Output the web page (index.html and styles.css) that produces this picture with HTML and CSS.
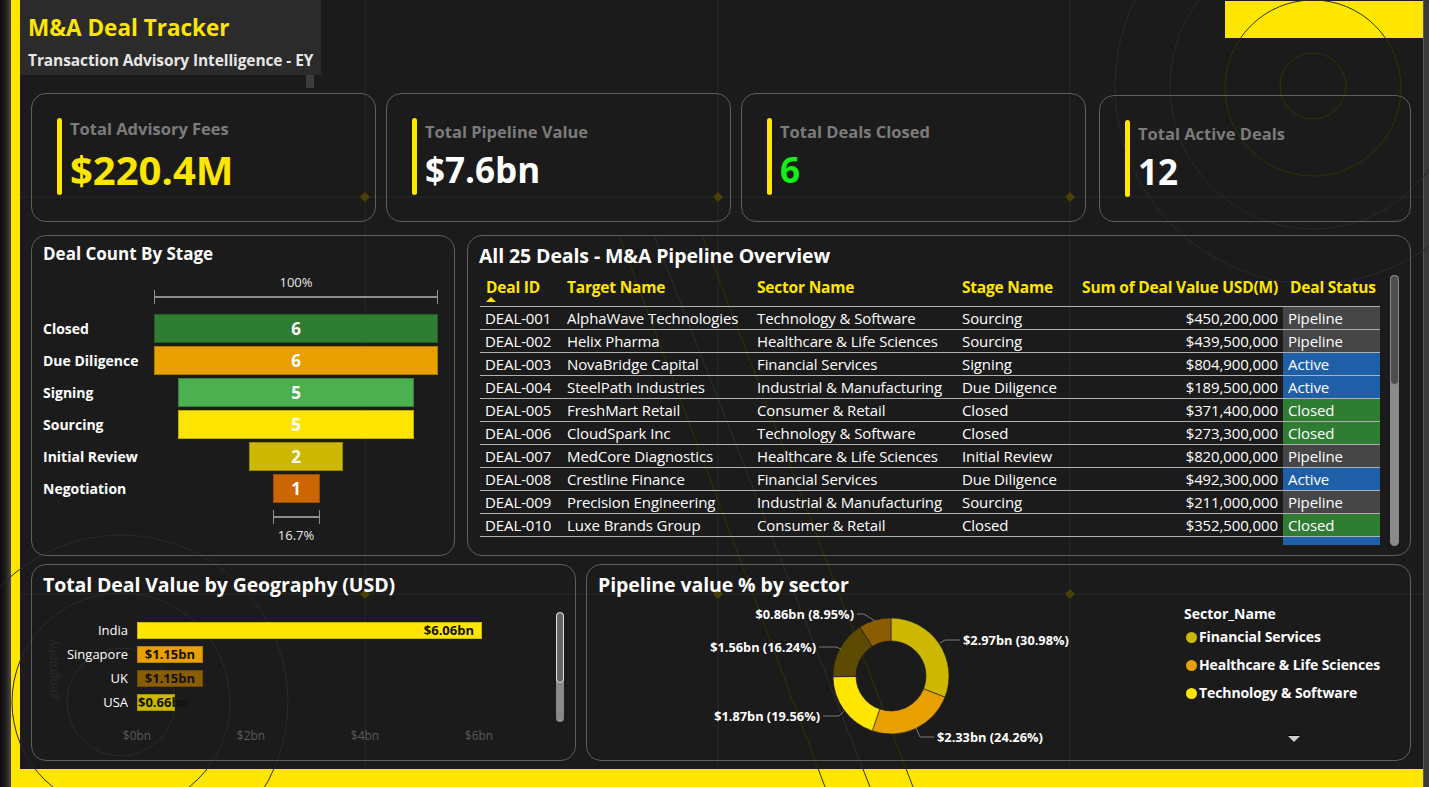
FILE: index.html
```html
<!DOCTYPE html>
<html lang="en">
<head>
<meta charset="utf-8">
<title>M&amp;A Deal Tracker</title>
<link rel="stylesheet" href="styles.css">
</head>
<body>
<div class="app">
  <div class="strip-left"></div>
  <div class="frame">
    <div class="canvas">
      <header class="header">
        <div class="title-col">
          <div class="title-box">
            <div class="title">M&amp;A Deal Tracker</div>
            <div class="subtitle">Transaction Advisory Intelligence - EY</div>
          </div>
          <div class="tab"></div>
        </div>
        <div class="yellow-block"></div>
      </header>

      <section class="kpis layer">
        <div class="kpi">
          <div class="accent"></div>
          <div class="kpi-txt">
            <div class="kpi-label">Total Advisory Fees</div>
            <div class="kpi-value v-yellow">$220.4M</div>
          </div>
        </div>
        <div class="kpi kpi--low">
          <div class="accent"></div>
          <div class="kpi-txt">
            <div class="kpi-label">Total Pipeline Value</div>
            <div class="kpi-value v-white">$7.6bn</div>
          </div>
        </div>
        <div class="kpi kpi--low">
          <div class="accent"></div>
          <div class="kpi-txt">
            <div class="kpi-label">Total Deals Closed</div>
            <div class="kpi-value v-green">6</div>
          </div>
        </div>
        <div class="kpi kpi--low kpi--last">
          <div class="accent"></div>
          <div class="kpi-txt">
            <div class="kpi-label">Total Active Deals</div>
            <div class="kpi-value v-white">12</div>
          </div>
        </div>
      </section>

      <section class="mid layer">
        <div class="card funnel-card">
          <div class="card-title small">Deal Count By Stage</div>
          <div class="f-row f-top">
            <div class="f-label"></div>
            <div class="f-track"><span class="f-pct">100%</span></div>
          </div>
          <div class="f-row f-brow">
            <div class="f-label"></div>
            <div class="f-track"><div class="bracket" style="width:284px"></div></div>
          </div>
          <div class="f-bars">
            <div class="f-row"><div class="f-label">Closed</div><div class="f-track"><div class="f-bar c-green" style="width:284px">6</div></div></div>
            <div class="f-row"><div class="f-label">Due Diligence</div><div class="f-track"><div class="f-bar c-orange" style="width:284px">6</div></div></div>
            <div class="f-row"><div class="f-label">Signing</div><div class="f-track"><div class="f-bar c-lgreen" style="width:236px">5</div></div></div>
            <div class="f-row"><div class="f-label">Sourcing</div><div class="f-track"><div class="f-bar c-yellow" style="width:236px">5</div></div></div>
            <div class="f-row"><div class="f-label">Initial Review</div><div class="f-track"><div class="f-bar c-gold" style="width:94px">2</div></div></div>
            <div class="f-row"><div class="f-label">Negotiation</div><div class="f-track"><div class="f-bar c-rust" style="width:47px">1</div></div></div>
          </div>
          <div class="f-row f-brow2">
            <div class="f-label"></div>
            <div class="f-track"><div class="bracket" style="width:47px"></div></div>
          </div>
          <div class="f-row f-bot">
            <div class="f-label"></div>
            <div class="f-track"><span class="f-pct">16.7%</span></div>
          </div>
        </div>

        <div class="card table-card">
          <div class="card-title">All 25 Deals - M&amp;A Pipeline Overview</div>
          <div class="tbl-area">
            <div class="tbl">
              <div class="tr th">
                <div class="c">Deal ID<span class="sort"></span></div>
                <div class="c">Target Name</div>
                <div class="c">Sector Name</div>
                <div class="c">Stage Name</div>
                <div class="c num">Sum of Deal Value USD(M)</div>
                <div class="c st-h">Deal Status</div>
              </div>
              <div class="tr"><div class="c">DEAL-001</div><div class="c">AlphaWave Technologies</div><div class="c">Technology &amp; Software</div><div class="c">Sourcing</div><div class="c num">$450,200,000</div><div class="c st pipeline">Pipeline</div></div>
              <div class="tr"><div class="c">DEAL-002</div><div class="c">Helix Pharma</div><div class="c">Healthcare &amp; Life Sciences</div><div class="c">Sourcing</div><div class="c num">$439,500,000</div><div class="c st pipeline">Pipeline</div></div>
              <div class="tr"><div class="c">DEAL-003</div><div class="c">NovaBridge Capital</div><div class="c">Financial Services</div><div class="c">Signing</div><div class="c num">$804,900,000</div><div class="c st active">Active</div></div>
              <div class="tr"><div class="c">DEAL-004</div><div class="c">SteelPath Industries</div><div class="c">Industrial &amp; Manufacturing</div><div class="c">Due Diligence</div><div class="c num">$189,500,000</div><div class="c st active">Active</div></div>
              <div class="tr"><div class="c">DEAL-005</div><div class="c">FreshMart Retail</div><div class="c">Consumer &amp; Retail</div><div class="c">Closed</div><div class="c num">$371,400,000</div><div class="c st closed">Closed</div></div>
              <div class="tr"><div class="c">DEAL-006</div><div class="c">CloudSpark Inc</div><div class="c">Technology &amp; Software</div><div class="c">Closed</div><div class="c num">$273,300,000</div><div class="c st closed">Closed</div></div>
              <div class="tr"><div class="c">DEAL-007</div><div class="c">MedCore Diagnostics</div><div class="c">Healthcare &amp; Life Sciences</div><div class="c">Initial Review</div><div class="c num">$820,000,000</div><div class="c st pipeline">Pipeline</div></div>
              <div class="tr"><div class="c">DEAL-008</div><div class="c">Crestline Finance</div><div class="c">Financial Services</div><div class="c">Due Diligence</div><div class="c num">$492,300,000</div><div class="c st active">Active</div></div>
              <div class="tr"><div class="c">DEAL-009</div><div class="c">Precision Engineering</div><div class="c">Industrial &amp; Manufacturing</div><div class="c">Sourcing</div><div class="c num">$211,000,000</div><div class="c st pipeline">Pipeline</div></div>
              <div class="tr"><div class="c">DEAL-010</div><div class="c">Luxe Brands Group</div><div class="c">Consumer &amp; Retail</div><div class="c">Closed</div><div class="c num">$352,500,000</div><div class="c st closed">Closed</div></div>
              <div class="tr tr-last"><div class="c"></div><div class="c"></div><div class="c"></div><div class="c"></div><div class="c num"></div><div class="c st active"></div></div>
            </div>
            <div class="vscroll"><div class="vthumb"></div></div>
          </div>
        </div>
      </section>

      <section class="bottom layer">
        <div class="card geo-card">
          <div class="card-title">Total Deal Value by Geography (USD)</div>
          <div class="geo-axis-title">geography</div>
          <div class="geo-rows">
            <div class="geo-row"><div class="geo-cat">India</div><div class="geo-bar c-yellow" style="width:345px">$6.06bn</div></div>
            <div class="geo-row"><div class="geo-cat">Singapore</div><div class="geo-bar c-orange" style="width:66px">$1.15bn</div></div>
            <div class="geo-row"><div class="geo-cat">UK</div><div class="geo-bar c-brown" style="width:66px">$1.15bn</div></div>
            <div class="geo-row"><div class="geo-cat">USA</div><div class="geo-bar c-gold geo-bar--over" style="width:38px">$0.66bn</div></div>
          </div>
          <div class="geo-axis">
            <span>$0bn</span><span>$2bn</span><span>$4bn</span><span>$6bn</span>
          </div>
          <div class="geo-scroll"><div class="geo-thumb"></div></div>
        </div>

        <div class="card donut-card">
          <div class="card-title">Pipeline value % by sector</div>
          <div class="donut-body">
            <svg class="donut" width="586" height="160" viewBox="0 0 586 160">
              <g class="segs">
                <path d="M293,18 A58,58 0 0 1 346.95,97.28 L325.56,88.84 A35,35 0 0 0 293,41 Z" fill="#ccb800"/>
                <path d="M346.95,97.28 A58,58 0 0 1 274.25,130.89 L281.68,109.12 A35,35 0 0 0 325.56,88.84 Z" fill="#e8a000"/>
                <path d="M274.25,130.89 A58,58 0 0 1 235,76.73 L258,76.44 A35,35 0 0 0 281.68,109.12 Z" fill="#ffe600"/>
                <path d="M235,76.73 A58,58 0 0 1 262.04,26.96 L274.32,46.4 A35,35 0 0 0 258,76.44 Z" fill="#5c4a00"/>
                <path d="M262.04,26.96 A58,58 0 0 1 293,18 L293,41 A35,35 0 0 0 274.32,46.4 Z" fill="#8a5d00"/>
              </g>
              <g class="leaders" fill="none" stroke="#7a7a7a" stroke-width="1">
                <polyline points="259,14 266,14 277,21"/>
                <polyline points="221,47 238,47 243,49"/>
                <polyline points="225,116 241,116 246,111"/>
                <polyline points="342,43 347,40 362,40"/>
                <polyline points="318,128 322,137 336,137"/>
              </g>
              <g class="dlabels">
                <text x="256" y="18.5" text-anchor="end">$0.86bn (8.95%)</text>
                <text x="218" y="51.5" text-anchor="end">$1.56bn (16.24%)</text>
                <text x="222" y="120.5" text-anchor="end">$1.87bn (19.56%)</text>
                <text x="365" y="44.5">$2.97bn (30.98%)</text>
                <text x="339" y="141.5">$2.33bn (24.26%)</text>
              </g>
            </svg>
            <div class="legend">
              <div class="lg-title">Sector_Name</div>
              <div class="lg-item"><span class="dot" style="background:#ccb800"></span>Financial Services</div>
              <div class="lg-item"><span class="dot" style="background:#e8a000"></span>Healthcare &amp; Life Sciences</div>
              <div class="lg-item"><span class="dot" style="background:#ffe600"></span>Technology &amp; Software</div>
              <div class="lg-more"></div>
            </div>
          </div>
        </div>
      </section>
    </div>
  </div>
  <div class="strip-right"></div>

  <svg class="deco" width="1429" height="787" viewBox="0 0 1429 787">
    <g fill="none" stroke="#282828" stroke-width="1">
      <line x1="365" y1="0" x2="365" y2="769"/>
      <line x1="718" y1="0" x2="718" y2="769"/>
      <line x1="1070" y1="0" x2="1070" y2="769"/>
      <line x1="20" y1="197" x2="1423" y2="197"/>
      <line x1="20" y1="594" x2="1423" y2="594"/>
    </g>
    <g fill="none" stroke="#2a2a2a" stroke-width="1">
      <circle cx="1313" cy="86" r="143"/>
      <circle cx="1313" cy="86" r="198"/>
      <circle cx="121" cy="702" r="54"/>
      <circle cx="121" cy="702" r="109"/>
      <circle cx="121" cy="702" r="167"/>
    </g>
    <g fill="none" stroke="#363200" stroke-width="1">
      <circle cx="1313" cy="88" r="88"/>
      <circle cx="1313" cy="86" r="33"/>
      <line x1="619" y1="235" x2="825" y2="787"/>
      <line x1="702" y1="235" x2="913" y2="787"/>
    </g>
    <line x1="654" y1="235" x2="870" y2="787" stroke="#2e2e2e" stroke-width="1"/>
    <g fill="#4a4100">
      <rect x="361.5" y="193.5" width="7" height="7" transform="rotate(45 365 197)"/>
      <rect x="714.5" y="193.5" width="7" height="7" transform="rotate(45 718 197)"/>
      <rect x="1066.5" y="193.5" width="7" height="7" transform="rotate(45 1070 197)"/>
      <rect x="361.5" y="590.5" width="7" height="7" transform="rotate(45 365 594)"/>
      <rect x="714.5" y="590.5" width="7" height="7" transform="rotate(45 718 594)"/>
      <rect x="1066.5" y="590.5" width="7" height="7" transform="rotate(45 1070 594)"/>
    </g>
  </svg>
</div>
</body>
</html>
```

FILE: styles.css
```css
* { box-sizing: border-box; }

body {
  margin: 0;
  background: #1b1b1b;
  font-family: "Open Sans", "Noto Sans", sans-serif;
  color: #ffffff;
}

.app {
  position: relative;
  display: flex;
  width: 1429px;
  height: 787px;
  overflow: hidden;
}

.strip-left {
  width: 11px;
  flex: none;
  background: linear-gradient(to right, #0c0c0c, #202020 55%, #4a4a4a);
}

.frame {
  width: 1412px;
  height: 787px;
  flex: none;
  border-left: 9px solid #ffe600;
  border-bottom: 18px solid #ffe600;
}

.strip-right {
  width: 6px;
  flex: none;
  background: #3a3a3a;
  border-left: 1px solid #5a5a5a;
}

.canvas {
  height: 769px;
  background: #1b1b1b;
  display: flex;
  flex-direction: column;
}

.deco {
  position: absolute;
  left: 0;
  top: 0;
  z-index: 0;
  pointer-events: none;
}

.layer {
  position: relative;
  z-index: 1;
}

/* header */
.header {
  display: flex;
  align-items: flex-start;
  height: 88px;
}

.title-col {
  display: flex;
  flex-direction: column;
}

.title-box {
  width: 301px;
  height: 75px;
  background: #2b2b2b;
  padding: 14px 0 0 8px;
}

.title {
  font-size: 22.5px;
  font-weight: 700;
  line-height: 28px;
  color: #ffe600;
}

.subtitle {
  margin-top: 8px;
  font-size: 15.5px;
  font-weight: 700;
  line-height: 20px;
  color: #e6e6e6;
  letter-spacing: -0.1px;
}

.tab {
  width: 8px;
  height: 13px;
  margin-left: 286px;
  background: #3c3c3c;
}

.yellow-block {
  margin-left: auto;
  margin-top: 1px;
  width: 198px;
  height: 37px;
  background: #ffe600;
}

/* KPI cards */
.kpis {
  display: flex;
  gap: 10px;
  margin-top: 5px;
  padding-left: 11px;
  align-items: flex-start;
}

.kpi {
  width: 345px;
  height: 129px;
  border: 1px solid #5e5e5e;
  border-radius: 15px;
  padding: 24px 0 0 25px;
  display: flex;
}

.kpi--last {
  width: 312px;
  height: 127px;
  margin-top: 2px;
  margin-left: 3px;
}

.accent {
  flex: none;
  width: 5px;
  height: 77px;
  border-radius: 3px;
  background: #ffe600;
}

.kpi-txt {
  margin-left: 8px;
}

.kpi-label {
  font-size: 16.5px;
  font-weight: 700;
  line-height: 22px;
  color: #7b7b7b;
}

.kpi--low .kpi-label {
  margin-top: 3px;
}

.kpi-value {
  margin-top: 7px;
  font-size: 40px;
  font-weight: 700;
  line-height: 46px;
}

.kpi--low .kpi-value {
  margin-top: 4px;
  font-size: 35px;
}

.v-yellow { color: #ffe600; }
.v-white { color: #ffffff; }
.v-green { color: #14f014; }

/* generic card */
.card {
  border: 1px solid #5e5e5e;
  border-radius: 15px;
  padding: 7px 0 0 11px;
  position: relative;
}

.card-title {
  font-size: 19.5px;
  font-weight: 700;
  line-height: 26px;
  color: #ffffff;
  letter-spacing: -0.1px;
}

.card-title.small {
  font-size: 17px;
  line-height: 22px;
  letter-spacing: 0;
}

/* middle row */
.mid {
  display: flex;
  gap: 12px;
  margin-top: 13px;
  padding-left: 11px;
  height: 321px;
}

.funnel-card {
  width: 424px;
  height: 321px;
}

.f-row {
  display: flex;
  align-items: center;
}

.f-label {
  width: 111px;
  flex: none;
  font-size: 14px;
  font-weight: 700;
  color: #ffffff;
  white-space: nowrap;
}

.f-track {
  width: 284px;
  flex: none;
  display: flex;
  justify-content: center;
}

.f-top {
  margin-top: 9px;
  height: 16px;
}

.f-pct {
  font-size: 13px;
  line-height: 16px;
  color: #e8e8e8;
}

.f-brow {
  height: 14px;
}

.bracket {
  height: 14px;
  border-left: 1.5px solid #8c8c8c;
  border-right: 1.5px solid #8c8c8c;
  position: relative;
}

.bracket::after {
  content: "";
  position: absolute;
  left: 0;
  right: 0;
  top: 6px;
  height: 2px;
  background: #8c8c8c;
}

.f-bars {
  margin-top: 10px;
  display: flex;
  flex-direction: column;
  gap: 3px;
}

.f-bars .f-row {
  height: 29px;
}

.f-bar {
  height: 29px;
  display: flex;
  align-items: center;
  justify-content: center;
  font-size: 17px;
  font-weight: 700;
  color: #ffffff;
  box-shadow: inset 0 0 0 1px rgba(0, 0, 0, 0.25);
}

.f-brow2 {
  margin-top: 7px;
  height: 14px;
}

.f-bot {
  margin-top: 3px;
  height: 16px;
}

.c-green { background: #2e7d32; }
.c-orange { background: #e8a000; }
.c-lgreen { background: #4caf50; }
.c-yellow { background: #ffe600; }
.c-gold { background: #ccb800; }
.c-rust { background: #cc6600; }
.c-brown { background: #8a5d00; }

/* table */
.table-card {
  width: 944px;
  height: 321px;
}

.tbl-area {
  display: flex;
  margin-top: 6px;
  margin-left: 1px;
}

.tbl {
  width: 900px;
  height: 270px;
  overflow: hidden;
}

.tr {
  display: grid;
  grid-template-columns: 82px 190px 205px 113px 213px 97px;
  height: 23px;
  border-bottom: 1px solid #b0b0b0;
}

.c {
  font-size: 15px;
  line-height: 23px;
  padding: 0 5px;
  white-space: nowrap;
  overflow: hidden;
  color: #ffffff;
  letter-spacing: -0.1px;
}

.c.num {
  text-align: right;
}

.tr.th {
  height: 32px;
}

.th .c {
  font-size: 15.5px;
  font-weight: 700;
  color: #ffe600;
  line-height: 20px;
  padding-top: 2px;
  position: relative;
  overflow: visible;
  letter-spacing: -0.2px;
}

.th .c:first-child {
  padding-left: 6px;
}

.th .st-h {
  padding-left: 7px;
}

.sort {
  position: absolute;
  left: 6px;
  top: 22px;
  width: 0;
  height: 0;
  border-left: 5px solid transparent;
  border-right: 5px solid transparent;
  border-bottom: 5px solid #ffe600;
}

.st.pipeline { background: #464646; }
.st.active { background: #1f5fa8; }
.st.closed { background: #2e7d32; }

.tr-last {
  border-bottom: none;
}

.vscroll {
  width: 9px;
  height: 271px;
  margin-left: 10px;
  border-radius: 5px;
  background: #8a8a8a;
  overflow: hidden;
}

.vthumb {
  height: 110px;
  background: #4d4d4d;
  border: 1px solid #8a8a8a;
  border-radius: 5px;
}

/* bottom row */
.bottom {
  display: flex;
  gap: 10px;
  margin-top: 8px;
  padding-left: 11px;
  height: 197px;
}

.geo-card {
  width: 545px;
  height: 197px;
}

.geo-axis-title {
  position: absolute;
  left: 12px;
  top: 134px;
  transform: rotate(-90deg);
  transform-origin: left top;
  font-size: 12px;
  color: #2a2a2a;
}

.geo-rows {
  margin-top: 20px;
}

.geo-row {
  display: flex;
  align-items: center;
  height: 24px;
}

.geo-cat {
  width: 85px;
  flex: none;
  text-align: right;
  font-size: 13px;
  color: #ffffff;
}

.geo-bar {
  margin-left: 9px;
  height: 17px;
  display: flex;
  align-items: center;
  justify-content: flex-end;
  padding-right: 8px;
  font-size: 13px;
  font-weight: 700;
  color: #111111;
  white-space: nowrap;
  box-shadow: inset 0 0 0 1px rgba(0, 0, 0, 0.2);
}

.geo-bar--over {
  justify-content: flex-start;
  padding-right: 0;
  padding-left: 1px;
}

.geo-axis {
  display: flex;
  margin-top: 14px;
  margin-left: 37px;
}

.geo-axis span {
  width: 114px;
  text-align: center;
  font-size: 12px;
  line-height: 16px;
  color: #5a5a5a;
}

.geo-scroll {
  position: absolute;
  left: 524px;
  top: 47px;
  width: 8px;
  height: 110px;
  border-radius: 4px;
  background: #8a8a8a;
  overflow: hidden;
}

.geo-thumb {
  height: 71px;
  border: 1px solid #e0e0e0;
  border-radius: 4px;
  background: #666666;
}

.donut-card {
  width: 825px;
  height: 197px;
}

.donut-body {
  display: flex;
  margin-top: 2px;
}

.donut {
  flex: none;
  display: block;
}

.segs path {
  stroke: #1b1b1b;
  stroke-width: 0.6;
}

.dlabels text {
  font-family: "Open Sans", "Noto Sans", sans-serif;
  font-size: 12.8px;
  font-weight: 700;
  fill: #ffffff;
}

.legend {
  padding-top: 5px;
}

.lg-title {
  font-size: 14px;
  font-weight: 700;
  line-height: 18px;
  color: #ffffff;
}

.lg-item {
  display: flex;
  align-items: center;
  margin-top: 5px;
  font-size: 14px;
  font-weight: 700;
  line-height: 18px;
  color: #ffffff;
  white-space: nowrap;
  letter-spacing: -0.1px;
}

.lg-item + .lg-item {
  margin-top: 10px;
}

.dot {
  width: 11px;
  height: 11px;
  border-radius: 50%;
  margin-left: 2px;
  margin-right: 2px;
}

.lg-more {
  margin-top: 34px;
  margin-left: 104px;
  width: 0;
  height: 0;
  border-left: 6px solid transparent;
  border-right: 6px solid transparent;
  border-top: 6px solid #d0d0d0;
  filter: drop-shadow(0 -1px 0 #000);
}
```
